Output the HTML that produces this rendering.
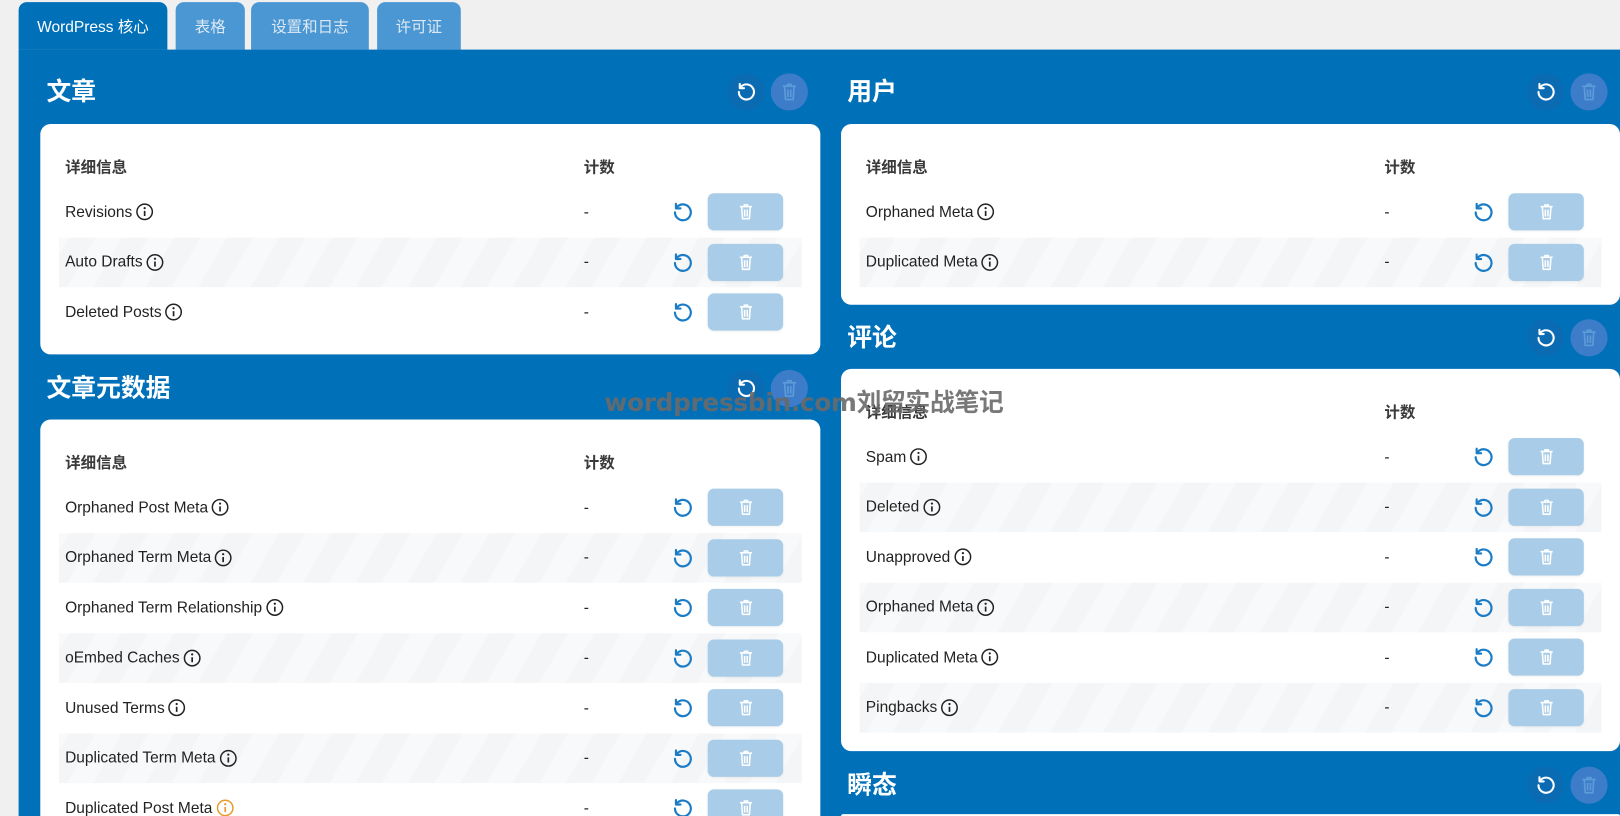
<!DOCTYPE html>
<html><head><meta charset="utf-8"><style>
*{box-sizing:border-box;margin:0;padding:0}
html,body{width:1620px;height:816px;overflow:hidden;background:#f0f0f1}
body{font-family:"Liberation Sans","Noto Sans CJK SC",sans-serif;color:#1e1e1e;position:relative}
#w{position:absolute;left:0;top:0;width:1568px;height:790px;overflow:hidden;transform:scale(1.03316);transform-origin:0 0}
.tab{position:absolute;top:2px;height:46px;border-radius:8px 8px 0 0;background:#4b97d3;color:#dce9f5;font-size:15px;display:flex;align-items:center;justify-content:center}
.tab.a{background:#0070b9;color:#fff}
.panel{position:absolute;left:18px;top:48px;width:1550px;height:742px;background:#0070b9}
.title{position:absolute;color:#fff;font-size:24px;font-weight:bold;line-height:30px}
.hic{position:absolute;width:36px;height:36px;border-radius:50%;display:flex;align-items:center;justify-content:center}
.hic.r{background:#0a6bb2}
.hic.t{background:#3d7cc9}
.card{position:absolute;background:#fff;border-radius:10px;overflow:hidden}
.hd{position:absolute;top:31px;font-size:15px;font-weight:bold;color:#3a3a3a}
.row{position:absolute;left:18px;right:18px;height:48.5px;display:flex;align-items:center;font-size:15px;color:#222}
.row.s{background:repeating-linear-gradient(-60deg,#f4f5f7 0 22px,#f8f9fa 22px 44px)}
.row .n{position:absolute;left:6px;display:flex;align-items:center;gap:3px}
.row .c{position:absolute;left:508px}
.row .rf{position:absolute;left:592px;top:13px}
.row .bt{position:absolute;left:628px;top:6px;width:73px;height:36px;border-radius:6px;background:#a9cde8;display:flex;align-items:center;justify-content:center;box-shadow:0 1px 2px rgba(0,0,0,.05)}
.wm{position:absolute;left:585px;top:370px;font-size:24px;font-weight:bold;color:rgba(105,105,105,.9);letter-spacing:-0.3px;font-family:"DejaVu Sans","Noto Sans CJK SC",sans-serif}
</style></head><body><div id="w">
<div class="tab a" style="left:18px;width:144px">WordPress 核心</div>
<div class="tab" style="left:170px;width:67px">表格</div>
<div class="tab" style="left:243px;width:114px">设置和日志</div>
<div class="tab" style="left:365px;width:81px">许可证</div>
<div class="panel"></div>

<svg width="0" height="0" style="position:absolute"><defs>
<symbol id="rf" viewBox="0 0 24 24"><path d="M4.5 12a8 8 0 1 0 2.6-5.9" fill="none" stroke="currentColor" stroke-width="2.2" stroke-linecap="round"/><path d="M5.5 3.5v4.5h4.5" fill="none" stroke="currentColor" stroke-width="2.2" stroke-linecap="round" stroke-linejoin="round"/></symbol>
<symbol id="tr" viewBox="0 0 24 24"><path d="M5 6h14M10 6V4h4v2M7 6l1 14h8l1-14M10.5 9.5v8M13.5 9.5v8" fill="none" stroke="currentColor" stroke-width="1.8" stroke-linejoin="round"/></symbol>
<symbol id="in" viewBox="0 0 20 20"><circle cx="10" cy="10" r="8.3" fill="none" stroke="currentColor" stroke-width="1.6"/><circle cx="10" cy="6" r="1.2" fill="currentColor"/><path d="M10 9v5.5" stroke="currentColor" stroke-width="1.8"/></symbol>
</defs></svg>

<!-- left -->
<div class="title" style="left:45px;top:75px">文章</div>
<div class="hic r" style="left:704px;top:71px;color:#fff"><svg width="22" height="22"><use href="#rf"/></svg></div>
<div class="hic t" style="left:746px;top:71px;color:#5d9ad8"><svg width="22" height="22"><use href="#tr"/></svg></div>
<div class="card" style="left:39px;top:120px;width:755px;height:223px">
<div class="hd" style="left:24px">详细信息</div><div class="hd" style="left:526px">计数</div>
<div class="row" style="top:61px"><span class="n">Revisions<svg width="18" height="18"><use href="#in"/></svg></span><span class="c">-</span><svg class="rf" width="23" height="23" style="color:#1a7cc6"><use href="#rf"/></svg><span class="bt" style="color:#fff"><svg width="20" height="20"><use href="#tr"/></svg></span></div>
<div class="row s" style="top:109.5px"><span class="n">Auto Drafts<svg width="18" height="18"><use href="#in"/></svg></span><span class="c">-</span><svg class="rf" width="23" height="23" style="color:#1a7cc6"><use href="#rf"/></svg><span class="bt" style="color:#fff"><svg width="20" height="20"><use href="#tr"/></svg></span></div>
<div class="row" style="top:158px"><span class="n">Deleted Posts<svg width="18" height="18"><use href="#in"/></svg></span><span class="c">-</span><svg class="rf" width="23" height="23" style="color:#1a7cc6"><use href="#rf"/></svg><span class="bt" style="color:#fff"><svg width="20" height="20"><use href="#tr"/></svg></span></div>
</div>

<div class="title" style="left:45px;top:362px">文章元数据</div>
<div class="hic r" style="left:704px;top:358px;color:#fff"><svg width="22" height="22"><use href="#rf"/></svg></div>
<div class="hic t" style="left:746px;top:358px;color:#5d9ad8"><svg width="22" height="22"><use href="#tr"/></svg></div>
<div class="card" style="left:39px;top:406px;width:755px;height:384px;border-radius:10px 10px 0 0">
<div class="hd" style="left:24px">详细信息</div><div class="hd" style="left:526px">计数</div>
<div class="row" style="top:61px"><span class="n">Orphaned Post Meta<svg width="18" height="18"><use href="#in"/></svg></span><span class="c">-</span><svg class="rf" width="23" height="23" style="color:#1a7cc6"><use href="#rf"/></svg><span class="bt" style="color:#fff"><svg width="20" height="20"><use href="#tr"/></svg></span></div>
<div class="row s" style="top:109.5px"><span class="n">Orphaned Term Meta<svg width="18" height="18"><use href="#in"/></svg></span><span class="c">-</span><svg class="rf" width="23" height="23" style="color:#1a7cc6"><use href="#rf"/></svg><span class="bt" style="color:#fff"><svg width="20" height="20"><use href="#tr"/></svg></span></div>
<div class="row" style="top:158px"><span class="n">Orphaned Term Relationship<svg width="18" height="18"><use href="#in"/></svg></span><span class="c">-</span><svg class="rf" width="23" height="23" style="color:#1a7cc6"><use href="#rf"/></svg><span class="bt" style="color:#fff"><svg width="20" height="20"><use href="#tr"/></svg></span></div>
<div class="row s" style="top:206.5px"><span class="n">oEmbed Caches<svg width="18" height="18"><use href="#in"/></svg></span><span class="c">-</span><svg class="rf" width="23" height="23" style="color:#1a7cc6"><use href="#rf"/></svg><span class="bt" style="color:#fff"><svg width="20" height="20"><use href="#tr"/></svg></span></div>
<div class="row" style="top:255px"><span class="n">Unused Terms<svg width="18" height="18"><use href="#in"/></svg></span><span class="c">-</span><svg class="rf" width="23" height="23" style="color:#1a7cc6"><use href="#rf"/></svg><span class="bt" style="color:#fff"><svg width="20" height="20"><use href="#tr"/></svg></span></div>
<div class="row s" style="top:303.5px"><span class="n">Duplicated Term Meta<svg width="18" height="18"><use href="#in"/></svg></span><span class="c">-</span><svg class="rf" width="23" height="23" style="color:#1a7cc6"><use href="#rf"/></svg><span class="bt" style="color:#fff"><svg width="20" height="20"><use href="#tr"/></svg></span></div>
<div class="row" style="top:352px"><span class="n">Duplicated Post Meta<svg width="18" height="18" style="color:#e59a2c"><use href="#in"/></svg></span><span class="c">-</span><svg class="rf" width="23" height="23" style="color:#1a7cc6"><use href="#rf"/></svg><span class="bt" style="color:#fff"><svg width="20" height="20"><use href="#tr"/></svg></span></div>
</div>

<!-- right -->
<div class="title" style="left:820px;top:75px">用户</div>
<div class="hic r" style="left:1478px;top:71px;color:#fff"><svg width="22" height="22"><use href="#rf"/></svg></div>
<div class="hic t" style="left:1520px;top:71px;color:#5d9ad8"><svg width="22" height="22"><use href="#tr"/></svg></div>
<div class="card" style="left:814px;top:120px;width:754px;height:175px">
<div class="hd" style="left:24px">详细信息</div><div class="hd" style="left:526px">计数</div>
<div class="row" style="top:61px"><span class="n">Orphaned Meta<svg width="18" height="18"><use href="#in"/></svg></span><span class="c">-</span><svg class="rf" width="23" height="23" style="color:#1a7cc6"><use href="#rf"/></svg><span class="bt" style="color:#fff"><svg width="20" height="20"><use href="#tr"/></svg></span></div>
<div class="row s" style="top:109.5px"><span class="n">Duplicated Meta<svg width="18" height="18"><use href="#in"/></svg></span><span class="c">-</span><svg class="rf" width="23" height="23" style="color:#1a7cc6"><use href="#rf"/></svg><span class="bt" style="color:#fff"><svg width="20" height="20"><use href="#tr"/></svg></span></div>
</div>

<div class="title" style="left:820px;top:313px">评论</div>
<div class="hic r" style="left:1478px;top:309px;color:#fff"><svg width="22" height="22"><use href="#rf"/></svg></div>
<div class="hic t" style="left:1520px;top:309px;color:#5d9ad8"><svg width="22" height="22"><use href="#tr"/></svg></div>
<div class="card" style="left:814px;top:357px;width:754px;height:370px">
<div class="hd" style="left:24px">详细信息</div><div class="hd" style="left:526px">计数</div>
<div class="row" style="top:61px"><span class="n">Spam<svg width="18" height="18"><use href="#in"/></svg></span><span class="c">-</span><svg class="rf" width="23" height="23" style="color:#1a7cc6"><use href="#rf"/></svg><span class="bt" style="color:#fff"><svg width="20" height="20"><use href="#tr"/></svg></span></div>
<div class="row s" style="top:109.5px"><span class="n">Deleted<svg width="18" height="18"><use href="#in"/></svg></span><span class="c">-</span><svg class="rf" width="23" height="23" style="color:#1a7cc6"><use href="#rf"/></svg><span class="bt" style="color:#fff"><svg width="20" height="20"><use href="#tr"/></svg></span></div>
<div class="row" style="top:158px"><span class="n">Unapproved<svg width="18" height="18"><use href="#in"/></svg></span><span class="c">-</span><svg class="rf" width="23" height="23" style="color:#1a7cc6"><use href="#rf"/></svg><span class="bt" style="color:#fff"><svg width="20" height="20"><use href="#tr"/></svg></span></div>
<div class="row s" style="top:206.5px"><span class="n">Orphaned Meta<svg width="18" height="18"><use href="#in"/></svg></span><span class="c">-</span><svg class="rf" width="23" height="23" style="color:#1a7cc6"><use href="#rf"/></svg><span class="bt" style="color:#fff"><svg width="20" height="20"><use href="#tr"/></svg></span></div>
<div class="row" style="top:255px"><span class="n">Duplicated Meta<svg width="18" height="18"><use href="#in"/></svg></span><span class="c">-</span><svg class="rf" width="23" height="23" style="color:#1a7cc6"><use href="#rf"/></svg><span class="bt" style="color:#fff"><svg width="20" height="20"><use href="#tr"/></svg></span></div>
<div class="row s" style="top:303.5px"><span class="n">Pingbacks<svg width="18" height="18"><use href="#in"/></svg></span><span class="c">-</span><svg class="rf" width="23" height="23" style="color:#1a7cc6"><use href="#rf"/></svg><span class="bt" style="color:#fff"><svg width="20" height="20"><use href="#tr"/></svg></span></div>
</div>

<div class="title" style="left:820px;top:746px">瞬态</div>
<div class="hic r" style="left:1478px;top:742px;color:#fff"><svg width="22" height="22"><use href="#rf"/></svg></div>
<div class="hic t" style="left:1520px;top:742px;color:#5d9ad8"><svg width="22" height="22"><use href="#tr"/></svg></div>
<div class="card" style="left:814px;top:788px;width:754px;height:2px;border-radius:2px 2px 0 0"></div>

<div class="wm">wordpressbin.com刘留实战笔记</div>
</div></body></html>
